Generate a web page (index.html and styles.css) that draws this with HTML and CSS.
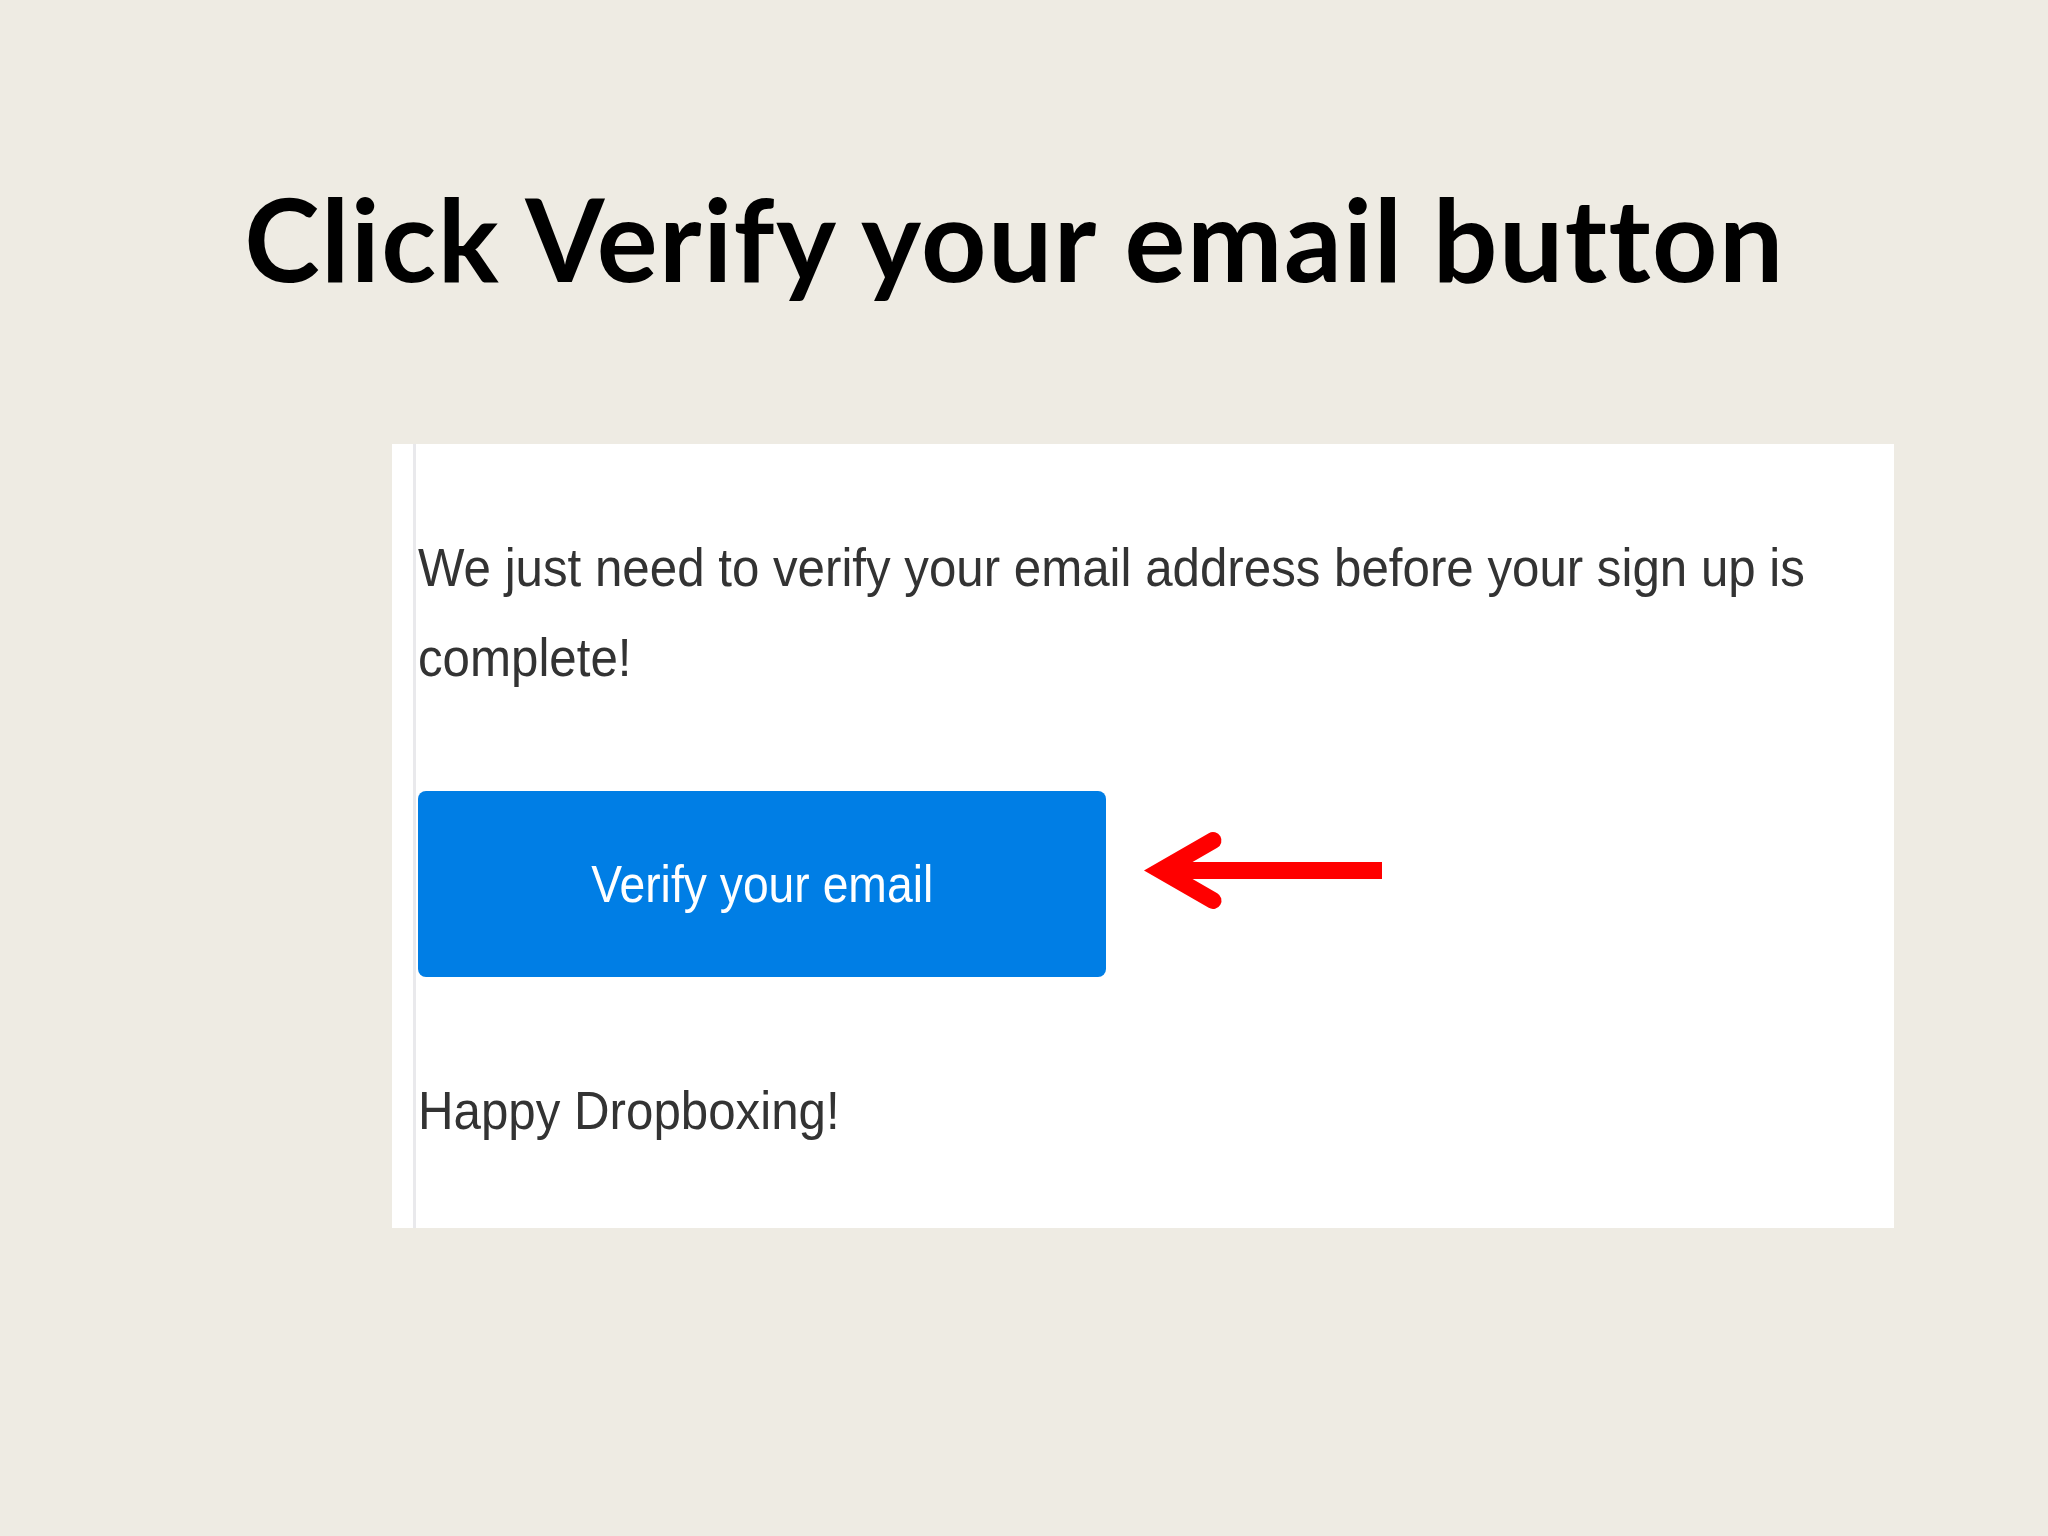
FILE: index.html
```html
<!DOCTYPE html>
<html lang="en">
<head>
<meta charset="utf-8">
<title>Click Verify your email button</title>
<link rel="stylesheet" href="styles.css">
</head>
<body>
<main class="slide">
  <h1 class="title">Click Verify your email button</h1>
  <section class="email">
    <div class="gutter"></div>
    <div class="body">
      <p class="text intro">We just need to verify your email address before your sign up is<br>complete!</p>
      <a class="btn"><span class="btn-label">Verify your email</span></a>
      <p class="text sign">Happy Dropboxing!</p>
    </div>
    <svg class="arrow" width="246" height="86" viewBox="0 0 246 86" aria-hidden="true">
      <polyline points="73,12.5 21,42.5 73,72.5" fill="none" stroke="#ff0000" stroke-width="17" stroke-linecap="round" stroke-linejoin="miter" stroke-miterlimit="4"/>
      <line x1="24" y1="42.5" x2="242" y2="42.5" stroke="#ff0000" stroke-width="17"/>
    </svg>
  </section>
</main>
</body>
</html>
```

FILE: styles.css
```css
html, body {
  margin: 0;
  padding: 0;
}

body {
  background: #eeebe3;
  width: 2048px;
  height: 1536px;
  overflow: hidden;
}

.slide {
  padding-top: 170px;
}

.title {
  margin: 0 19px 0 0;
  font-family: "Lato", "Open Sans", sans-serif;
  font-weight: 700;
  font-size: 114px;
  line-height: 1.2;
  letter-spacing: 1.5px;
  font-variant-ligatures: none;
  text-align: center;
  color: #000;
}

.email {
  position: relative;
  margin-top: 137px;
  margin-left: 392px;
  width: 1502px;
  height: 784px;
  background: #ffffff;
  display: flex;
}

.gutter {
  flex: none;
  width: 21px;
  border-right: 3px solid #e9e9ec;
}

.body {
  flex: 1;
  min-width: 0;
  padding-top: 78px;
  padding-left: 2px;
}

.text {
  margin: 0;
  font-family: "Liberation Sans", Arial, sans-serif;
  font-size: 54px;
  line-height: 90px;
  color: #333333;
  white-space: nowrap;
  transform: scaleX(0.912);
  transform-origin: left center;
}

.btn {
  margin-top: 89px;
  width: 688px;
  height: 186px;
  border-radius: 8px;
  background: #007ee5;
  display: flex;
  align-items: center;
  justify-content: center;
  color: #ffffff;
  font-family: "Liberation Sans", Arial, sans-serif;
  font-size: 52px;
  text-decoration: none;
}

.btn-label {
  display: inline-block;
  transform: scaleX(0.89);
}

.sign {
  margin-top: 88px;
}

.arrow {
  position: absolute;
  left: 748px;
  top: 384px;
}
```
